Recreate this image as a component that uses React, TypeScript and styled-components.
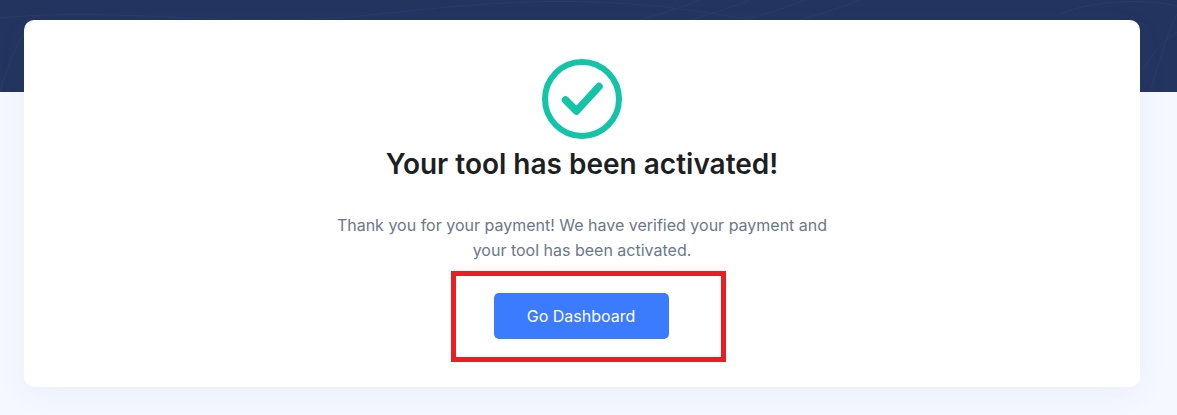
import React from "react";
import styled, { createGlobalStyle } from "styled-components";

const GlobalStyle = createGlobalStyle`
  html, body {
    margin: 0;
    padding: 0;
    background: #f5f8ff;
    font-family: Inter, "Liberation Sans", sans-serif;
  }
`;

const Page = styled.div`
  width: 1177px;
  height: 415px;
  overflow: hidden;
  background: #f5f8ff;
`;

const Banner = styled.header`
  height: 92px;
  margin-bottom: -72px;
  background: #23355f;
`;

const Waves = styled.svg`
  display: block;
  width: 100%;
  height: 100%;
`;

const Card = styled.main`
  position: relative;
  box-sizing: border-box;
  width: 1116px;
  height: 367px;
  margin-left: 24px;
  padding-top: 38px;
  display: flex;
  flex-direction: column;
  align-items: center;
  background: #fff;
  border-radius: 10px;
  box-shadow: 0 8px 30px rgba(60, 80, 140, 0.05);
`;

const Icon = styled.svg`
  display: block;
  width: 82px;
  height: 82px;
  margin-right: 1px;
`;

const Title = styled.h1`
  margin: 7px 0 0;
  font-size: 28px;
  line-height: 34px;
  font-weight: 600;
  color: #1d1f23;
`;

const Message = styled.p`
  width: 520px;
  margin: 32px 0 0;
  font-size: 16px;
  line-height: 25px;
  text-align: center;
  color: #69788a;
`;

const ButtonRow = styled.div`
  position: relative;
  margin-top: 30px;
  margin-right: 2px;
`;

const DashboardButton = styled.button`
  display: block;
  width: 175px;
  height: 46px;
  padding: 0;
  border: 0;
  border-radius: 5px;
  background: #3b7bfd;
  color: #fff;
  font-family: inherit;
  font-size: 16px;
  font-weight: 400;
`;

const Highlight = styled.div`
  position: absolute;
  top: -22px;
  left: -43px;
  box-sizing: border-box;
  width: 275px;
  height: 91px;
  border: 5px solid #ea1c24;
  pointer-events: none;
`;

const wavePaths = [
  "M0 18C120 6 240 30 380 14S620 -6 760 22",
  "M640 20C660 14 680 8 700 0",
  "M690 20C710 14 730 8 750 0",
  "M745 20C765 14 785 8 805 0",
  "M800 20C820 14 840 8 860 0",
  "M0 92C6 70 14 50 24 34",
  "M1060 14C1100 -2 1150 0 1177 6",
  "M1150 92C1160 60 1168 30 1177 14",
  "M1142 70C1155 50 1165 40 1177 32",
];

export default function App() {
  return (
    <Page>
      <GlobalStyle />
      <Banner>
        <Waves viewBox="0 0 1177 92" preserveAspectRatio="none">
          {wavePaths.map((d) => (
            <path key={d} d={d} fill="none" stroke="#293b66" strokeWidth="1" />
          ))}
        </Waves>
      </Banner>
      <Card>
        <Icon viewBox="0 0 82 82">
          <circle cx="41" cy="41" r="37" fill="none" stroke="#14c4a6" strokeWidth="6" />
          <path
            d="M24.5 42L35.5 53L58 28.5"
            fill="none"
            stroke="#14c4a6"
            strokeWidth="7.5"
            strokeLinecap="round"
            strokeLinejoin="round"
          />
        </Icon>
        <Title>Your tool has been activated!</Title>
        <Message>
          Thank you for your payment! We have verified your payment and
          <br />
          your tool has been activated.
        </Message>
        <ButtonRow>
          <DashboardButton>Go Dashboard</DashboardButton>
          <Highlight />
        </ButtonRow>
      </Card>
    </Page>
  );
}
